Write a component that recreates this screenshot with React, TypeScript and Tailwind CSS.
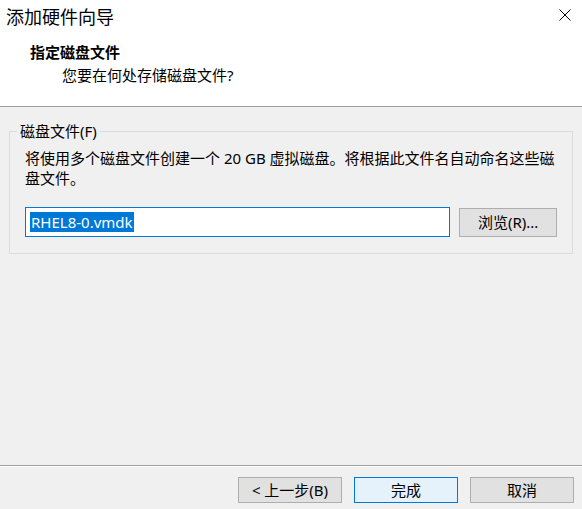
import React from "react";

const font = { fontFamily: '"Noto Sans", "Noto Sans CJK SC", sans-serif' };

function Btn({ children, primary }: { children: React.ReactNode; primary?: boolean }) {
  return (
    <div
      className={
        "w-[104px] h-[26px] flex items-center justify-center text-[15px] leading-[20px] text-black border " +
        (primary ? "bg-[#e5f1fb] border-[#0078d7]" : "bg-[#e1e1e1] border-[#adadad]")
      }
    >
      {children}
    </div>
  );
}

export default function App() {
  return (
    <div className="w-[582px] h-[509px] bg-[#f0f0f0] flex flex-col overflow-hidden text-black" style={font}>
      <div className="h-[106px] bg-white shrink-0 flex flex-col">
        <div className="flex justify-between items-start">
          <div className="pl-[6px] pt-[5px] text-[18px] leading-[24px]">添加硬件向导</div>
          <svg width="12" height="12" viewBox="0 0 12 12" className="mt-[9px] mr-[11px]">
            <path d="M0.5 0.5 L11.5 11.5 M11.5 0.5 L0.5 11.5" stroke="#000" strokeWidth="1" fill="none" />
          </svg>
        </div>
        <div className="pl-[30px] mt-[12px] text-[15px] leading-[22px] font-bold">指定磁盘文件</div>
        <div className="pl-[62px] mt-[1px] text-[15px] leading-[22px]">您要在何处存储磁盘文件?</div>
      </div>
      <div className="h-px bg-[#a0a0a0] shrink-0" />
      <div className="px-[9px] pt-[24px] shrink-0">
        <div className="relative border border-[#dcdcdc] h-[123px] px-[15px] pt-[16px]">
          <div className="absolute -top-[11px] left-[7px] px-[3px] bg-[#f0f0f0] text-[15px] leading-[20px]">
            磁盘文件(F)
          </div>
          <div className="text-[15px] leading-[20px]">
            <div>将使用多个磁盘文件创建一个 20 GB 虚拟磁盘。将根据此文件名自动命名这些磁</div>
            <div>盘文件。</div>
          </div>
          <div className="flex items-center gap-[9px] mt-[19px]">
            <div className="w-[426px] h-[30px] bg-white border border-[#0078d7] flex items-center pl-[4px]">
              <span className="bg-[#0078d7] text-white text-[15px] leading-[20px] px-px">RHEL8-0.vmdk</span>
            </div>
            <div className="w-[98px] h-[29px] bg-[#e1e1e1] border border-[#adadad] flex items-center justify-center text-[15px] leading-[20px]">
              浏览(R)...
            </div>
          </div>
        </div>
      </div>
      <div className="flex-1" />
      <div className="h-px bg-[#a0a0a0] shrink-0" />
      <div className="h-px bg-white shrink-0" />
      <div className="h-[42px] shrink-0 flex justify-end items-start pt-[10px] pr-[8px] gap-[12px]">
        <Btn>&lt; 上一步(B)</Btn>
        <Btn primary>完成</Btn>
        <Btn>取消</Btn>
      </div>
    </div>
  );
}
